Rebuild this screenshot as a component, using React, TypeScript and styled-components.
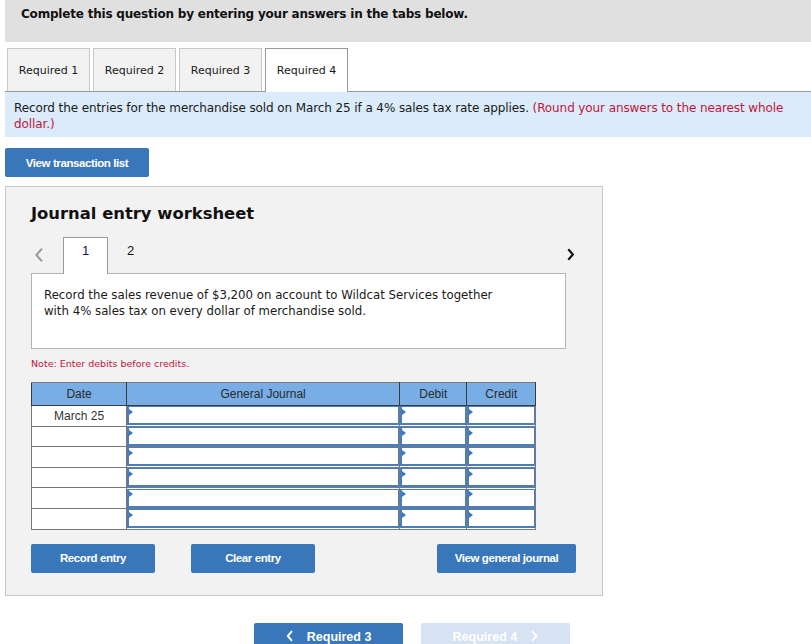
import styled, { createGlobalStyle } from 'styled-components'

const GlobalStyle = createGlobalStyle`
  html, body {
    margin: 0;
    padding: 0;
    background: #fff;
  }
  body {
    font-family: 'DejaVu Sans', Verdana, sans-serif;
    color: #1a1a1a;
  }
`

const Page = styled.div`
  padding-left: 5px;
  overflow: hidden;
  height: 644px;
`

const TopBar = styled.div`
  background: #e0e0e0;
  height: 42px;
  box-sizing: border-box;
  padding: 7px 0 0 16px;
  font-size: 12px;
  letter-spacing: -0.2px;
  font-weight: bold;
  color: #111;
`

const TabRow = styled.div`
  display: flex;
  gap: 3px;
  margin-top: 6px;
  padding-left: 2px;
  border-bottom: 1px solid #999;
`

const Tab = styled.div<{ $active?: boolean }>`
  width: 83px;
  box-sizing: border-box;
  display: flex;
  align-items: center;
  justify-content: center;
  font-size: 11px;
  color: #1a1a1a;
  background: ${(p) => (p.$active ? '#fff' : '#f2f2f2')};
  border: 1px solid ${(p) => (p.$active ? '#999' : '#c8c8c8')};
  border-bottom: none;
  margin-bottom: ${(p) => (p.$active ? '-1px' : '0')};
  height: ${(p) => (p.$active ? '44px' : '43px')};
`

const Info = styled.div`
  background: #dbebf9;
  height: 45px;
  box-sizing: border-box;
  padding: 8px 9px 0;
  font-size: 12px;
  letter-spacing: -0.1px;
  line-height: 16px;
  color: #1a1a1a;
`

const Red = styled.span`
  color: #c0163c;
`

const BlueButton = styled.button<{ $w: number }>`
  flex-shrink: 0;
  width: ${(p) => p.$w}px;
  height: 29px;
  background: #3a77ba;
  color: #fff;
  border: none;
  border-radius: 2px;
  font-family: 'Liberation Sans', Arial, sans-serif;
  font-weight: bold;
  font-size: 11.5px;
  letter-spacing: -0.4px;
  padding: 0;
`

const TransactionButton = styled(BlueButton)`
  margin-top: 11px;
  display: block;
`

const GeneralJournalButton = styled(BlueButton)`
  margin-left: 86px;
`

const Panel = styled.div`
  margin-top: 9px;
  width: 598px;
  height: 410px;
  box-sizing: border-box;
  background: #f2f2f2;
  border: 1px solid #c8c8c8;
  padding: 16px 36px 0 25px;
`

const Title = styled.h2`
  margin: 0;
  font-size: 16.4px;
  line-height: 22px;
  font-weight: bold;
  color: #111;
`

const EntryNav = styled.div`
  display: flex;
  align-items: flex-end;
  margin-top: 11px;
  height: 37px;
`

const Arrow = styled.span<{ $side: 'left' | 'right' }>`
  width: ${(p) => (p.$side === 'left' ? '32px' : '20px')};
  align-self: center;
  display: flex;
  justify-content: flex-start;
  padding-left: ${(p) => (p.$side === 'left' ? '3px' : '0')};
  margin-right: ${(p) => (p.$side === 'right' ? '-21px' : '0')};
  box-sizing: border-box;
`

const EntryTab = styled.div<{ $active?: boolean }>`
  width: 45px;
  height: 37px;
  box-sizing: border-box;
  display: flex;
  align-items: center;
  justify-content: center;
  padding-bottom: 11px;
  font-family: 'Liberation Sans', Arial, sans-serif;
  font-size: 13px;
  color: ${(p) => (p.$active ? '#141452' : '#111')};
  background: ${(p) => (p.$active ? '#fff' : 'transparent')};
  border: ${(p) => (p.$active ? '1px solid #9a9a9a' : '1px solid transparent')};
  border-bottom: none;
  margin-bottom: -1px;
  position: relative;
  z-index: 1;
`

const Spacer = styled.div`
  flex: 1;
`

const Description = styled.div`
  width: 535px;
  height: 76px;
  box-sizing: border-box;
  background: #fff;
  border: 1px solid #b4b4b4;
  padding: 13px 12px 0;
  font-size: 11.75px;
  line-height: 16px;
  color: #1a1a1a;
`

const Note = styled.div`
  margin-top: 9px;
  font-size: 9.5px;
  color: #c0163c;
`

const Journal = styled.table`
  margin-top: 13px;
  border-collapse: collapse;
  width: 505px;
  font-family: 'Liberation Sans', Arial, sans-serif;
  font-size: 12px;
  color: #333;
`

const Head = styled.th<{ $w: number }>`
  width: ${(p) => p.$w}px;
  height: 22px;
  padding: 0;
  background: #78ade6;
  border: 1px solid #3a3a3a;
  border-top-color: #777;
  font-weight: normal;
  color: #2a2a2a;
`

const DateCell = styled.td`
  height: 19.6px;
  padding: 0;
  background: #fff;
  border: 1px solid #777;
  text-align: center;
  color: #333;
`

const InputCell = styled.td`
  height: 19.6px;
  padding: 0;
  background: #fff;
  border: 1px solid #6e7d8e;
  position: relative;

  &::before {
    content: '';
    position: absolute;
    left: 2px;
    top: 3px;
    border-left: 4px solid #3b78c2;
    border-top: 3px solid transparent;
    border-bottom: 3px solid transparent;
  }
`

const Field = styled.div`
  height: 19px;
  box-sizing: border-box;
  border: 1px solid #4d7db7;
  border-left-width: 2px;
  border-bottom-width: 2px;
`

const ActionRow = styled.div`
  display: flex;
  margin-top: 14px;
  gap: 36px;
`

const BottomNav = styled.div`
  display: flex;
  justify-content: center;
  gap: 18px;
  margin-top: 27px;
  padding-left: 8px;
`

const NavButton = styled.button<{ $disabled?: boolean }>`
  width: 149px;
  height: 28px;
  border: none;
  border-radius: 2px;
  background: ${(p) => (p.$disabled ? '#d7e3f2' : '#3a77ba')};
  color: #fff;
  font-family: 'Liberation Sans', Arial, sans-serif;
  font-weight: bold;
  font-size: 12.5px;
  display: flex;
  align-items: flex-start;
  justify-content: center;
  gap: 14px;
  padding-top: 7px;
`

function Chevron({ dir, color, size = 14, weight = 1.6 }: { dir: 'left' | 'right'; color: string; size?: number; weight?: number }) {
  return (
    <svg width={size * 0.6} height={size} viewBox="0 0 6 10">
      <path
        d={dir === 'left' ? 'M5 1 L1.5 5 L5 9' : 'M1 1 L4.5 5 L1 9'}
        fill="none"
        stroke={color}
        strokeWidth={weight}
      />
    </svg>
  )
}

const rows = ['March 25', '', '', '', '', '']

export default function App() {
  return (
    <Page>
      <GlobalStyle />
      <TopBar>Complete this question by entering your answers in the tabs below.</TopBar>
      <TabRow>
        <Tab>Required 1</Tab>
        <Tab>Required 2</Tab>
        <Tab>Required 3</Tab>
        <Tab $active>Required 4</Tab>
      </TabRow>
      <Info>
        Record the entries for the merchandise sold on March 25 if a 4% sales tax rate applies.{' '}
        <Red>(Round your answers to the nearest whole dollar.)</Red>
      </Info>
      <TransactionButton $w={144}>View transaction list</TransactionButton>
      <Panel>
        <Title>Journal entry worksheet</Title>
        <EntryNav>
          <Arrow $side="left">
            <Chevron dir="left" color="#9a9a9a" size={16} weight={1.3} />
          </Arrow>
          <EntryTab $active>1</EntryTab>
          <EntryTab>2</EntryTab>
          <Spacer />
          <Arrow $side="right">
            <Chevron dir="right" color="#111" size={13} />
          </Arrow>
        </EntryNav>
        <Description>
          Record the sales revenue of $3,200 on account to Wildcat Services together
          <br />
          with 4% sales tax on every dollar of merchandise sold.
        </Description>
        <Note>Note: Enter debits before credits.</Note>
        <Journal>
          <thead>
            <tr>
              <Head $w={95}>Date</Head>
              <Head $w={275}>General Journal</Head>
              <Head $w={67}>Debit</Head>
              <Head $w={68}>Credit</Head>
            </tr>
          </thead>
          <tbody>
            {rows.map((d, i) => (
              <tr key={`row-${i}`}>
                <DateCell>{d}</DateCell>
                <InputCell><Field /></InputCell>
                <InputCell><Field /></InputCell>
                <InputCell><Field /></InputCell>
              </tr>
            ))}
          </tbody>
        </Journal>
        <ActionRow>
          <BlueButton $w={124}>Record entry</BlueButton>
          <BlueButton $w={124}>Clear entry</BlueButton>
          <GeneralJournalButton $w={139}>View general journal</GeneralJournalButton>
        </ActionRow>
      </Panel>
      <BottomNav>
        <NavButton>
          <Chevron dir="left" color="#fff" size={12} />
          Required 3
        </NavButton>
        <NavButton $disabled>
          Required 4
          <Chevron dir="right" color="#fff" size={12} />
        </NavButton>
      </BottomNav>
    </Page>
  )
}
